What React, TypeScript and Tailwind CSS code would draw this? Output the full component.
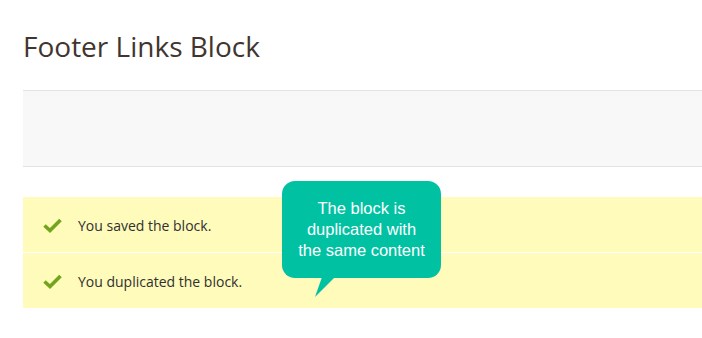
import { ReactNode } from "react";

function CheckMark() {
  return (
    <svg width="19" height="15" viewBox="0 0 19 15" className="shrink-0">
      <path d="M1.5 7.5 L7 12.5 L17.5 2" fill="none" stroke="#72a51c" strokeWidth="3.6" />
    </svg>
  );
}

function Message({ children }: { children: ReactNode }) {
  return (
    <div className="flex h-[55px] items-center gap-[16px] bg-[#fffbbb] pl-[20px] pt-[1px]">
      <CheckMark />
      <span className="text-[14px] text-[#303030]">{children}</span>
    </div>
  );
}

export default function App() {
  return (
    <div className="relative h-[338px] w-[702px] overflow-hidden bg-white pl-[23px] font-['Open_Sans',sans-serif]">
      {/* PAGE TITLE */}
      <h1 className="pt-[28px] text-[28px] font-normal leading-[36px] text-[#41362f]">Footer Links Block</h1>

      {/* ACTIONS BAR */}
      <div className="mt-[26px] h-[77px] border-y border-[#e3e3e3] bg-[#f8f8f8]"></div>

      {/* MESSAGES */}
      <div className="mt-[30px] flex flex-col gap-[1px] bg-white">
        <Message>You saved the block.</Message>
        <Message>You duplicated the block.</Message>
      </div>

      {/* CALLOUT */}
      <div className="absolute left-[282px] top-[181px]">
        <div className="flex h-[97px] w-[159px] items-center justify-center rounded-[13px] bg-[#00c2a3] text-center font-['Liberation_Sans',Arial,sans-serif] text-[16.5px] leading-[21px] text-white">
          The block is
          <br />
          duplicated with
          <br />
          the same content
        </div>
        <svg width="24" height="22" viewBox="0 0 24 22" className="absolute left-[30px] top-[96px]">
          <path d="M10 0 L23 0 L3 20 Z" fill="#00c2a3" />
        </svg>
      </div>
    </div>
  );
}
